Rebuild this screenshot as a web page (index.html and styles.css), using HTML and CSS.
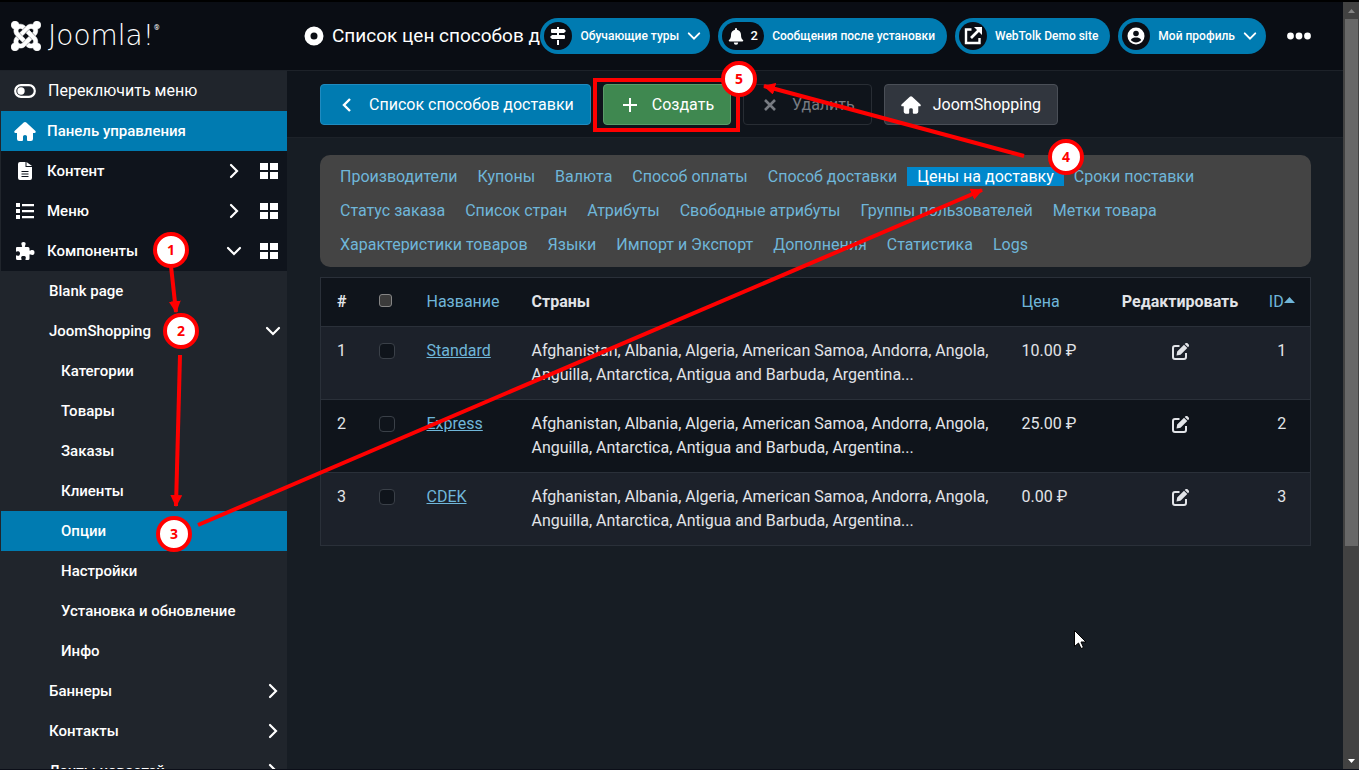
FILE: index.html
```html
<!DOCTYPE html>
<html lang="ru">
<head>
<meta charset="utf-8">
<title>Список цен способов доставки</title>
<link rel="stylesheet" href="styles.css">
</head>
<body>
<svg class="sprite" aria-hidden="true">
  <symbol id="right" viewBox="0 0 16 16"><path d="M5 2l6 6-6 6" fill="none" stroke="currentColor" stroke-width="2.2" stroke-linecap="round"/></symbol>
  <symbol id="left" viewBox="0 0 16 16"><path d="M11 2L5 8l6 6" fill="none" stroke="currentColor" stroke-width="2.4"/></symbol>
  <symbol id="down" viewBox="0 0 16 16"><path d="M2 5l6 6 6-6" fill="none" stroke="currentColor" stroke-width="2.2" stroke-linecap="round"/></symbol>
  <symbol id="home" viewBox="0 0 22 19"><path fill="currentColor" d="M11 0q.7 0 1.300.5l8.900 8.300q.8.800.5 1.500-.3.700-1.200.7H19v6q0 2-2 2h-3q-1 0-1-1v-3.500q0-1.500-2-1.500t-2 1.500V18q0 1-1 1H5q-2 0-2-2v-6H1.500Q.6 11 .3 10.300q-.3-.7.5-1.500L9.700.5Q10.300 0 11 0z"/></symbol>
  <symbol id="grid" viewBox="0 0 18 16"><path fill="currentColor" d="M0 0h8v7H0zM10 0h8v7h-8zM0 9h8v7H0zM10 9h8v7h-8z"/></symbol>
  <symbol id="edit" viewBox="0 0 17 17"><path d="M7.500 3H3a2 2 0 00-2 2v9a2 2 0 002 2h9a2 2 0 002-2V10" fill="none" stroke="currentColor" stroke-width="2"/><path fill="currentColor" d="M12 1.700L15.300 5 8.500 11.800 4.500 12.500l.7-4zM12.700 1l.8-.7c.6-.5 1.400-.5 2 0l1.200 1.200c.5.6.5 1.400 0 2l-.7.800z"/></symbol>
</svg>
<div class="app">
  <div class="page">
    <header class="header">
      <a class="logo" href="#" aria-label="Joomla!">
        <svg width="30" height="30" viewBox="0 32 448 448" aria-hidden="true"><path fill="#fff" stroke="#fff" stroke-width="8" d="M.6 92.100C.6 58.800 27.400 32 60.400 32c30 0 54.500 21.900 59.200 50.200 32.600-7.600 67.100.6 96.500 30l-44.300 44.300c-20.500-20.500-42.600-16.300-55.400-3.500-14.300 14.300-14.300 37.900 0 52.200l99.500 99.500-44 44.300c-87.700-87.200-49.700-49.700-99.800-99.700-26.800-26.500-35-64.800-24.800-98.900C20.400 144.600.6 120.700.6 92.100zm129.500 116.400l44.300 44.300c10-10 89.700-89.700 99.700-99.800 14.300-14.300 37.600-14.300 51.900 0 12.800 12.800 17 35-3.500 55.400l44 44.300c31.200-31.200 38.500-67.600 28.900-101.200 29.200-4.100 51.900-29.200 51.900-59.500 0-33.200-26.800-60.100-59.800-60.100-30.300 0-55.400 22.500-59.500 51.600-33.800-9.900-71.700-1.500-98.300 25.100-18.300 19.100-71.100 71.500-99.600 99.900zm266.300 152.200c8.200-32.700-.9-68.500-26.300-93.900-11.800-12.200 5 4.700-99.500-99.700l-44.300 44.300 99.700 99.700c14.300 14.300 14.300 37.600 0 51.900-12.800 12.800-35 17-55.400-3.500l-44 44.300c27.600 30.200 68 38.800 102.700 28 5.500 27.400 29.700 48.100 58.900 48.100 33 0 59.800-26.800 59.800-60.100 0-30.200-22.500-55-51.600-59.100zm-84.300-53.100l-44-44.300c-87 86.400-50.400 50.400-99.700 99.800-14.300 14.300-37.600 14.300-51.900 0-13.100-13.400-16.900-35.300 3.200-55.400l-44-44.300c-30.200 30.200-38 65.200-29.500 98.300-26.700 6-46.200 29.900-46.200 58.200C0 453.200 26.800 480 59.800 480c28.600 0 52.500-19.800 58.600-46.700 32.700 8.200 68.500-.6 94.200-26 32.100-32 12.200-12.400 99.500-99.700z"/></svg>
        <span class="wordmark">Joomla!</span><sup class="reg">®</sup>
      </a>
      <h1 class="title"><svg width="20" height="20" viewBox="0 0 20 20" aria-hidden="true"><circle cx="10" cy="10" r="6.500" fill="none" stroke="#fff" stroke-width="6"/></svg><span>Список цен способов доставки</span></h1>
      <nav class="pills">
        <button class="pill menu"><span class="bubble"><svg width="18" height="18" viewBox="0 0 18 18"><path fill="#fff" d="M8 0h2v2h5l2 2-2 2H3a1 1 0 01-1-1V3a1 1 0 011-1h5zM3 8h12a1 1 0 011 1v2a1 1 0 01-1 1H3l-2-2zM8 13h2v5H8zM8 6h2v2H8z"/></svg></span>Обучающие туры<svg class="caret" width="14" height="14"><use href="#down"/></svg></button>
        <button class="pill"><span class="bubble wide"><svg width="16" height="17" viewBox="0 0 16 17"><path fill="#fff" d="M8 0a1 1 0 011 1v.7c2.500.5 4 2.500 4 5 0 3 .8 4.300 2 5.300.5.500.2 1.500-.7 1.500H1.700C.8 13.500.500 12.500 1 12c1.200-1 2-2.300 2-5.300 0-2.500 1.500-4.500 4-5V1a1 1 0 011-1zM5.800 14.500h4.400a2.200 2.200 0 01-4.400 0z"/></svg>2</span>Сообщения после установки</button>
        <a class="pill" href="#"><span class="bubble"><svg width="18" height="18" viewBox="0 0 18 18"><path d="M7.500 2.500H2v13.500h13.500V11" fill="none" stroke="#fff" stroke-width="2.400"/><path d="M7 11l8-8" stroke="#fff" stroke-width="2.600"/><path fill="#fff" d="M10 0h8v8z"/></svg></span>WebTolk Demo site</a>
        <button class="pill menu"><span class="bubble"><svg width="18" height="18" viewBox="0 0 18 18"><circle cx="9" cy="9" r="8.500" fill="#fff"/><circle cx="9" cy="6.500" r="2.800" fill="#0a0d14"/><path fill="#0a0d14" d="M3.800 13c1-2.200 3-2.500 5.200-2.500s4.200.3 5.200 2.500c-2.600 3.300-7.800 3.300-10.400 0z"/></svg></span>Мой профиль<svg class="caret" width="14" height="14"><use href="#down"/></svg></button>
        <button class="more" aria-label="Ещё"><svg width="24" height="8" viewBox="0 0 24 8" fill="#fff"><circle cx="3.500" cy="4" r="3.400"/><circle cx="12" cy="4" r="3.400"/><circle cx="20.500" cy="4" r="3.400"/></svg></button>
      </nav>
    </header>
    <div class="body">
      <nav class="sidebar">
        <button class="item toggler"><svg class="ico" width="22" height="14" viewBox="0 0 22 14"><rect x="1.200" y="1.200" width="19.600" height="11.600" rx="5.800" fill="none" stroke="#fff" stroke-width="2.200"/><circle cx="7" cy="7" r="3.700" fill="#fff"/></svg><span>Переключить меню</span></button>
        <a class="item active" href="#"><svg class="ico" width="22" height="19"><use href="#home"/></svg><span>Панель управления</span></a>
        <a class="item top" href="#"><svg class="ico" width="22" height="18" viewBox="0 0 22 18"><path fill="#fff" d="M6 0h5.500v5H18v11a2 2 0 01-2 2H6a2 2 0 01-2-2V2a2 2 0 012-2zM12.500 0L18 4h-5.500z"/><path d="M7.500 9.500h7M7.500 12h7M7.500 14.500h7" stroke="#0f141c" stroke-width="1"/></svg><span>Контент</span><svg class="arrow" width="16" height="16"><use href="#right"/></svg><svg width="18" height="16"><use href="#grid"/></svg></a>
        <a class="item top" href="#"><svg class="ico" width="22" height="16" viewBox="0 0 22 16"><path fill="#fff" d="M2 0h4v4H2zM2 6h4v4H2zM2 12h4v4H2zM8 1h12v2.200H8zM8 7h12v2.200H8zM8 13h12v2.200H8z"/></svg><span>Меню</span><svg class="arrow" width="16" height="16"><use href="#right"/></svg><svg width="18" height="16"><use href="#grid"/></svg></a>
        <a class="item top" href="#"><svg class="ico" width="22" height="20" viewBox="0 0 22 20"><path fill="#fff" d="M2 7q0-1 1-1h4.500q1 0 .5-1C7 3 7 1 9.500 1S12 3 11 5q-.5 1 .5 1H14q1.500 0 1.500 1.500V9q0 1 1 .5c2-1 4-.5 4 2s-2 3-4 2q-1-.5-1 .5v3.500q0 1.500-1.500 1.500h-2q-1 0-.5-1c1-2.500-.500-3-2-3s-3 .5-2 3q.5 1-.5 1H3.500Q2 19 2 17.500V15q0-1 1-.5c2 1 3-.5 3-2s-1-3-3-2q-1 .5-1-.500z"/></svg><span>Компоненты</span><svg class="arrow" width="16" height="16"><use href="#down"/></svg><svg width="18" height="16"><use href="#grid"/></svg></a>
        <a class="item sub" href="#"><span>Blank page</span></a>
        <a class="item sub" href="#"><span>JoomShopping</span><svg class="arrow" width="16" height="16"><use href="#down"/></svg></a>
        <a class="item leaf" href="#"><span>Категории</span></a>
        <a class="item leaf" href="#"><span>Товары</span></a>
        <a class="item leaf" href="#"><span>Заказы</span></a>
        <a class="item leaf" href="#"><span>Клиенты</span></a>
        <a class="item leaf active" href="#"><span>Опции</span></a>
        <a class="item leaf" href="#"><span>Настройки</span></a>
        <a class="item leaf" href="#"><span>Установка и обновление</span></a>
        <a class="item leaf" href="#"><span>Инфо</span></a>
        <a class="item sub" href="#"><span>Баннеры</span><svg class="arrow" width="16" height="16"><use href="#right"/></svg></a>
        <a class="item sub" href="#"><span>Контакты</span><svg class="arrow" width="16" height="16"><use href="#right"/></svg></a>
        <a class="item sub" href="#"><span>Ленты новостей</span><svg class="arrow" width="16" height="16"><use href="#right"/></svg></a>
      </nav>
      <div class="content">
        <div class="toolbar">
          <button class="btn primary"><svg width="16" height="16"><use href="#left"/></svg>Список способов доставки</button>
          <button class="btn success"><svg width="16" height="16" viewBox="0 0 16 16"><path d="M8 1v14M1 8h14" stroke="#fff" stroke-width="2"/></svg>Создать</button>
          <button class="btn ghost" disabled><svg width="16" height="16" viewBox="0 0 16 16"><path d="M3 3l10 10M13 3L3 13" stroke="currentColor" stroke-width="2.600"/></svg>Удалить</button>
          <button class="btn dark"><svg width="20" height="18"><use href="#home"/></svg>JoomShopping</button>
        </div>
        <main class="main">
          <ul class="submenu">
            <li><a href="#">Производители</a></li><li><a href="#">Купоны</a></li><li><a href="#">Валюта</a></li><li><a href="#">Способ оплаты</a></li><li><a href="#">Способ доставки</a></li><li><a class="current" href="#">Цены на доставку</a></li><li><a href="#">Сроки поставки</a></li><li><a href="#">Статус заказа</a></li><li><a href="#">Список стран</a></li><li><a href="#">Атрибуты</a></li><li><a href="#">Свободные атрибуты</a></li><li><a href="#">Группы пользователей</a></li><li><a href="#">Метки товара</a></li><li><a href="#">Характеристики товаров</a></li><li><a href="#">Языки</a></li><li><a href="#">Импорт и Экспорт</a></li><li><a href="#">Дополнения</a></li><li><a href="#">Статистика</a></li><li><a href="#">Logs</a></li>
          </ul>
          <table class="list">
            <colgroup><col class="c-num"><col class="c-check"><col class="c-name"><col><col class="c-price"><col class="c-edit"><col class="c-id"></colgroup>
            <thead><tr><th>#</th><th><input class="all" type="checkbox" aria-label="Выбрать все"></th><th><a href="#">Название</a></th><th>Страны</th><th><a href="#">Цена</a></th><th class="mid">Редактировать</th><th class="mid id"><a href="#">ID<svg width="11" height="7" viewBox="0 0 11 7"><path fill="currentColor" d="M5.500 0L11 6H0z"/></svg></a></th></tr></thead>
            <tbody>
              <tr><td>1</td><td><input type="checkbox" aria-label="Standard"></td><td><a href="#">Standard</a></td><td>Afghanistan, Albania, Algeria, American Samoa, Andorra, Angola, Anguilla, Antarctica, Antigua and Barbuda, Argentina...</td><td>10.00 ₽</td><td class="mid"><a class="edit" href="#" aria-label="Редактировать"><svg width="17" height="17"><use href="#edit"/></svg></a></td><td class="mid">1</td></tr>
              <tr><td>2</td><td><input type="checkbox" aria-label="Express"></td><td><a href="#">Express</a></td><td>Afghanistan, Albania, Algeria, American Samoa, Andorra, Angola, Anguilla, Antarctica, Antigua and Barbuda, Argentina...</td><td>25.00 ₽</td><td class="mid"><a class="edit" href="#" aria-label="Редактировать"><svg width="17" height="17"><use href="#edit"/></svg></a></td><td class="mid">2</td></tr>
              <tr><td>3</td><td><input type="checkbox" aria-label="CDEK"></td><td><a href="#">CDEK</a></td><td>Afghanistan, Albania, Algeria, American Samoa, Andorra, Angola, Anguilla, Antarctica, Antigua and Barbuda, Argentina...</td><td>0.00 ₽</td><td class="mid"><a class="edit" href="#" aria-label="Редактировать"><svg width="17" height="17"><use href="#edit"/></svg></a></td><td class="mid">3</td></tr>
            </tbody>
          </table>
        </main>
      </div>
    </div>
  </div>
  <div class="scrollbar" aria-hidden="true">
    <svg width="16" height="17" viewBox="0 0 16 17"><path fill="#868686" d="M5 11l3.500-4 3.500 4z"/></svg>
    <div class="thumb"></div>
    <svg width="16" height="17" viewBox="0 0 16 17"><path fill="#fff" d="M5 7h7l-3.500 4z"/></svg>
  </div>
</div>
<svg class="notes" aria-hidden="true">
  <defs><marker id="head" markerUnits="userSpaceOnUse" markerWidth="14" markerHeight="12" refX="11" refY="6" orient="auto"><path fill="#f00" d="M0 0l12 6-12 6z"/></marker></defs>
  <g fill="none" stroke="#f00" stroke-width="4">
    <rect x="595" y="80" width="143" height="50"/>
    <g marker-end="url(#head)">
      <path d="M171 266L176 312"/>
      <path d="M180 355L176 506"/>
      <path d="M198 525L982 190"/>
      <path d="M1024 156L764 86"/>
    </g>
    <g fill="#fff">
      <circle cx="171" cy="250" r="16"/><circle cx="181" cy="331" r="16"/><circle cx="174" cy="534" r="16"/><circle cx="1066" cy="157" r="16"/><circle cx="739" cy="79" r="16"/>
    </g>
  </g>
  <g class="digits">
    <text x="171" y="255">1</text><text x="181" y="336">2</text><text x="174" y="539">3</text><text x="1066" y="162">4</text><text x="739" y="84">5</text>
  </g>
  <path fill="#fff" stroke="#000" d="M1074.500 630.500v16l4-3.500 2.500 5.500 2.500-1-2.500-5.500h5z"/>
</svg>
</body>
</html>
```
FILE: styles.css
```css
* { box-sizing: border-box; }
body {
  margin: 0;
  background: #171d24;
  color: #e2e4e8;
  font: 16px/24px Roboto, "Liberation Sans", sans-serif;
  overflow: hidden;
}
a { color: #6fb6d9; text-decoration: none; }
button { font: inherit; color: inherit; border: 0; background: none; cursor: pointer; }
svg { flex: none; }
.sprite { position: absolute; width: 0; height: 0; }
.app { display: flex; height: 100vh; border-top: 2px solid #000; border-bottom: 1px solid #0b0e18; }
.page { flex: 1; min-width: 0; display: flex; flex-direction: column; }

.header {
  display: flex;
  align-items: center;
  flex: none;
  height: 69px;
  background: #0a0d14;
  border-bottom: 1px solid #1d2229;
  color: #fff;
}
.logo { display: flex; align-items: center; flex: none; width: 304px; padding-left: 11px; color: #fff; }
.wordmark { margin-left: 7px; font: 200 28px/32px "DejaVu Sans", sans-serif; }
.reg { font-size: 7px; line-height: 8px; align-self: flex-start; margin: 4px 0 0; }
.title {
  flex: 1;
  min-width: 0;
  display: flex;
  align-items: center;
  gap: 8px;
  margin: 0 -2px 0 0;
  font-size: 19px;
  font-weight: 400;
  white-space: nowrap;
  overflow: hidden;
}
.pills { position: relative; display: flex; align-items: center; gap: 8px; padding-right: 27px; }
.pill {
  display: flex;
  align-items: center;
  height: 36px;
  padding: 0 12px 0 4px;
  border-radius: 18px;
  background: #007bb1;
  color: #fff;
  font-size: 12px;
  font-weight: 500;
  white-space: nowrap;
}
.pill.menu { padding-right: 9px; }
.bubble {
  display: flex;
  align-items: center;
  justify-content: center;
  gap: 6px;
  width: 28px;
  height: 28px;
  margin-right: 8px;
  border-radius: 14px;
  background: #0a0d14;
}
.bubble.wide { width: 42px; font-size: 13px; }
.caret { margin-left: 8px; }
.more { display: flex; padding: 8px 5px 8px 13px; }

.body { flex: 1; min-height: 0; display: flex; }
.sidebar {
  flex: none;
  width: 287px;
  padding-left: 1px;
  background: #20252c;
  overflow: hidden;
}
.item {
  display: flex;
  align-items: center;
  width: 100%;
  height: 40px;
  padding: 0 9px 0 13px;
  color: #fff;
  font-size: 15px;
  font-weight: 500;
}
.item span { flex: 1; text-align: left; }
.ico { margin-right: 11px; }
.toggler { font-size: 16px; font-weight: 400; }
.toggler .ico { margin-right: 12px; }
.top { background: #0f141c; }
.top .arrow { margin-right: 18px; }
.sub { padding: 0 6px 0 48px; }
.leaf { padding-left: 60px; }
.active { background: #007bb1; }

.content { flex: 1; min-width: 0; }
.toolbar {
  display: flex;
  gap: 12px;
  padding: 13px 33px 12px;
  background: #0f141b;
  border-bottom: 1px solid #1d2229;
}
.btn {
  display: flex;
  align-items: center;
  gap: 14px;
  height: 41px;
  padding: 0 16px 0 18px;
  border: 1px solid #208bc0;
  border-radius: 4px;
  color: #fff;
  white-space: nowrap;
}
.primary { background: #007bb1; }
.success { background: #3f8850; border-color: #5a9c69; }
.ghost { border-color: #282d34; color: #777b82; }
.dark { gap: 12px; padding-left: 16px; background: #31363e; border-color: #4a4f57; }
.main { padding: 17px 32px 0 33px; }
.submenu {
  display: flex;
  flex-wrap: wrap;
  margin: 0 0 10px;
  padding: 5px 10px;
  border-radius: 10px;
  background: #444;
  list-style: none;
  line-height: 34px;
}
.submenu a { padding: 0 10px; }
.submenu .current { background: #0088cc; color: #fff; }

.list { width: 100%; table-layout: fixed; border-collapse: collapse; border: 1px solid #2a3039; }
.list tr { background: #0f141b; border-bottom: 1px solid #2a3039; }
.list tbody tr:nth-child(odd) { background: #1c212a; }
.list th, .list td { padding: 12px 0 12px 16px; text-align: left; vertical-align: top; }
.list th a { font-weight: 400; }
.list td a { text-decoration: underline; }
.list .mid { padding: 12px 0; text-align: center; }
.c-num { width: 42px; }
.c-check { width: 48px; }
.c-name { width: 105px; }
.c-price { width: 101px; }
.c-edit { width: 147px; }
.c-id { width: 57px; }
.list td .edit { display: flex; justify-content: center; padding-top: 4px; color: #e2e4e8; }
.id svg { vertical-align: 3px; }
input {
  appearance: none;
  display: block;
  width: 16px;
  height: 16px;
  margin: 4px 0 0;
  border: 1px solid #3a4048;
  border-radius: 4px;
  background: #0f141b;
}
.all { width: 13px; height: 13px; border-color: #858585; border-radius: 3px; background: #3b3b3b; }

.scrollbar { flex: none; display: flex; flex-direction: column; width: 16px; background: #424242; }
.thumb { height: 527px; margin: 0 1px auto 2px; background: #686868; }
.notes { position: absolute; top: 0; left: 0; width: 100%; height: 100%; pointer-events: none; }
.digits { fill: #f00; font: 700 14px "Open Sans", sans-serif; text-anchor: middle; }
```
